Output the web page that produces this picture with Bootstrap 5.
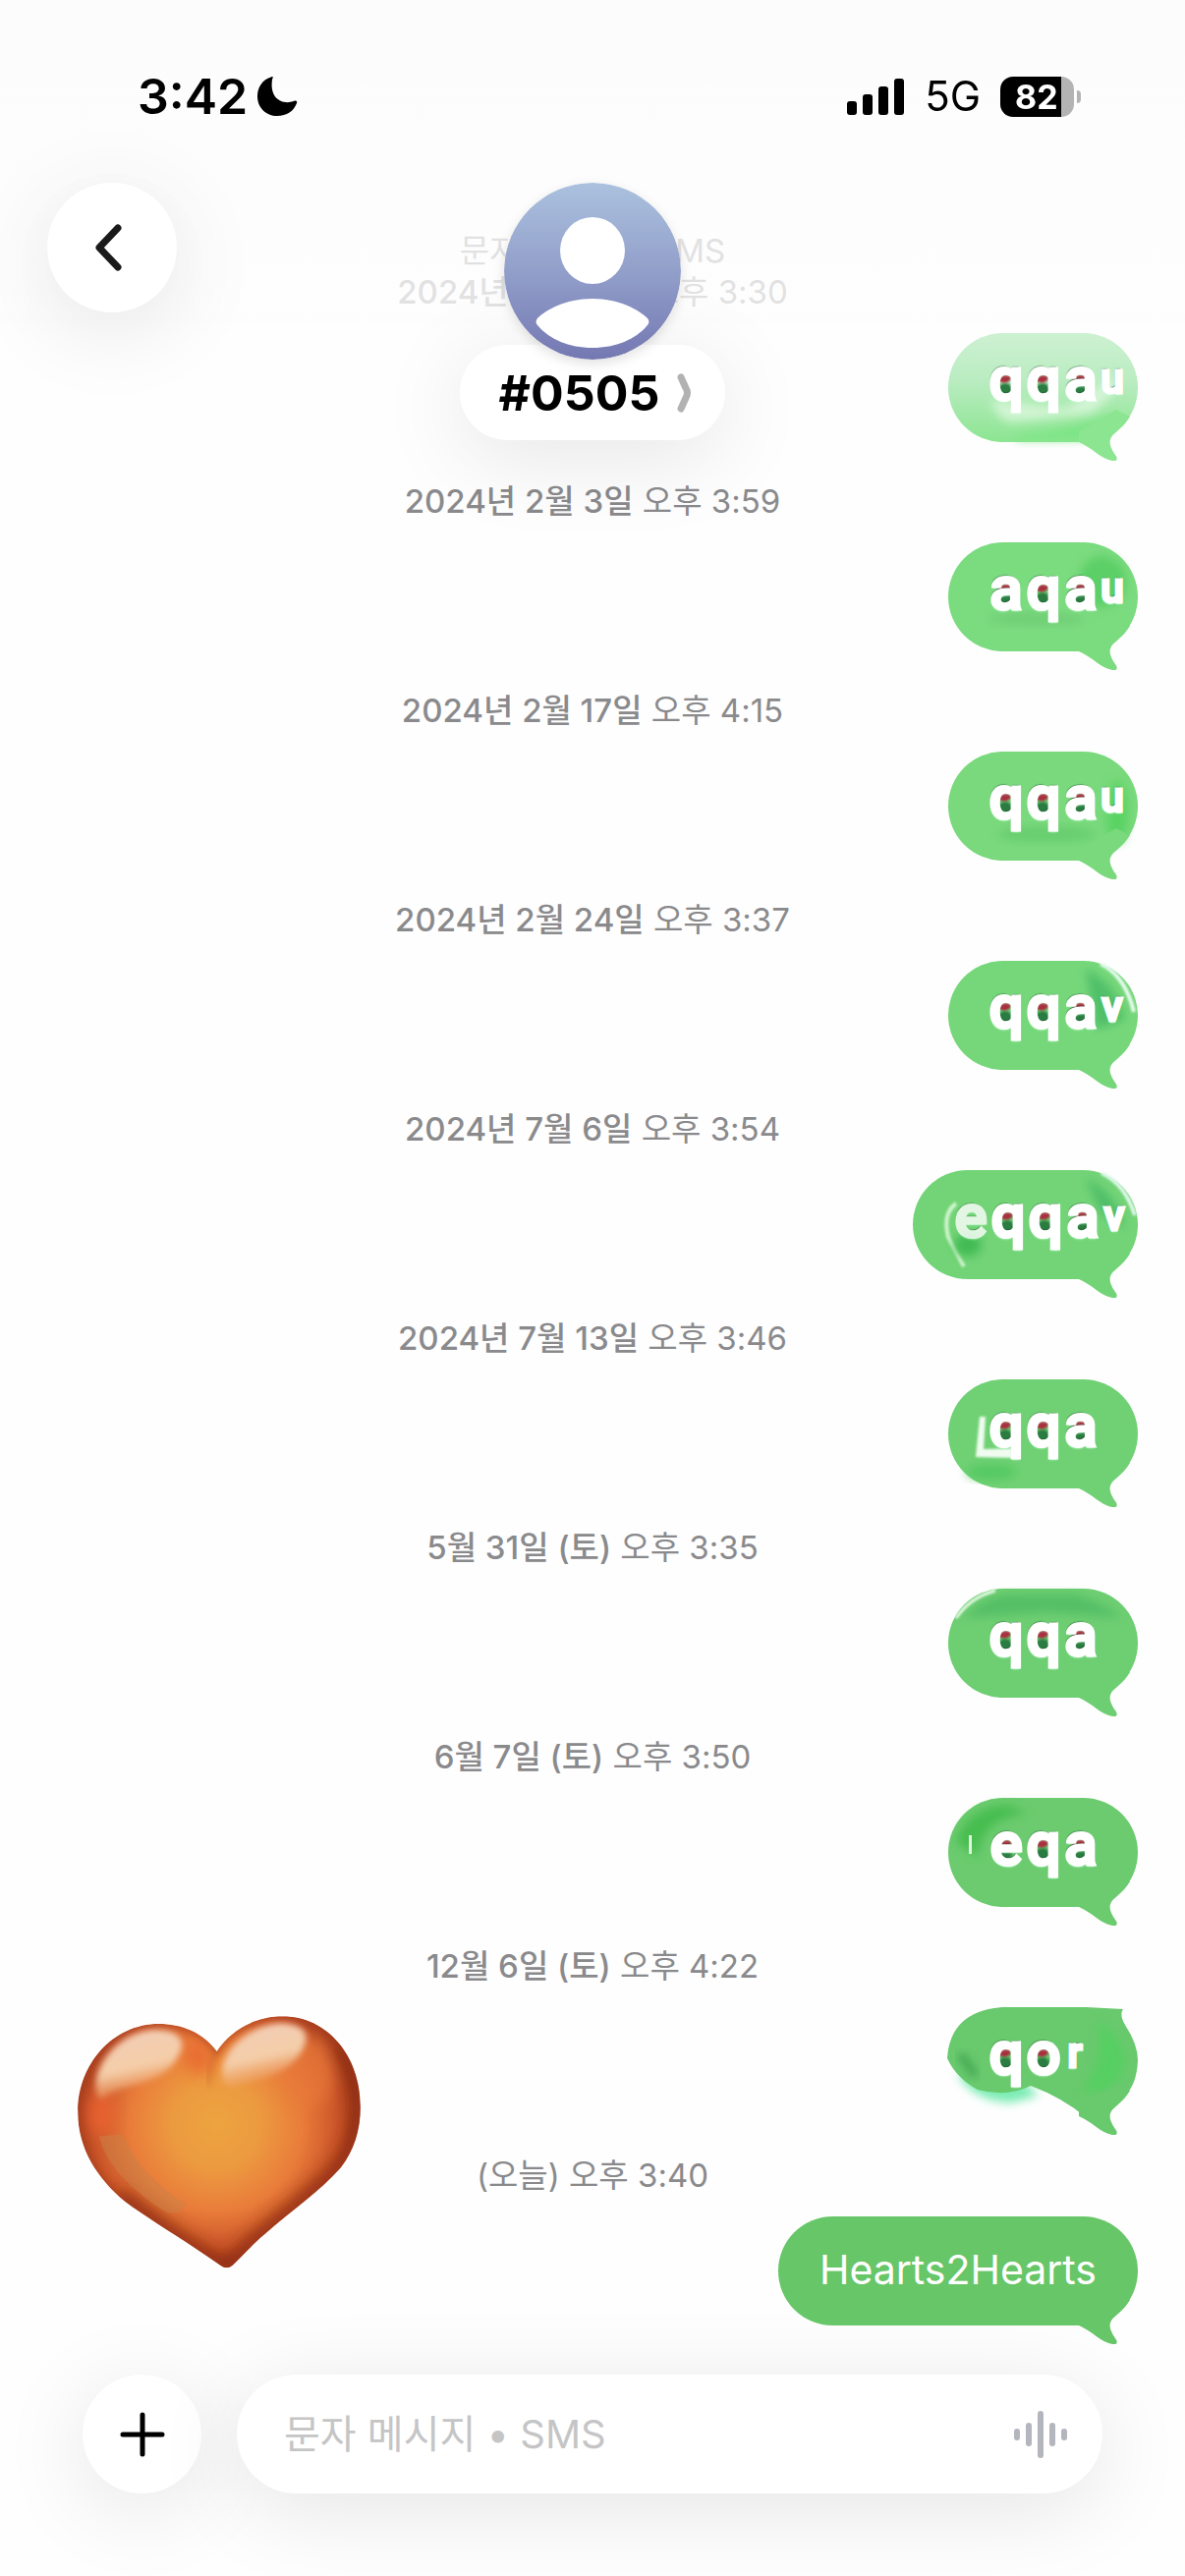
<!DOCTYPE html>
<html lang="ko">
<head>
<meta charset="utf-8">
<meta name="viewport" content="width=device-width, initial-scale=1">
<title>#0505</title>
<link href="https://cdn.jsdelivr.net/npm/bootstrap@5.3.0/dist/css/bootstrap.min.css" rel="stylesheet">
<style>
  body { font-family: Inter, "Noto Sans CJK KR", sans-serif; background: #fefefe; color: #000; }
  svg { display: block; flex: none; }

  /* header floating over the conversation */
  .top-bar { background: linear-gradient(rgba(252,252,252,1) 0, rgba(252,252,252,.76) 110px, rgba(253,253,253,.76) 310px, rgba(254,254,254,0) 340px); height: 530px; pointer-events: none; }
  .top-bar button { pointer-events: auto; }
  .status { padding: 68px 106px 0 140px; height: 186px; }
  .clock { font-size: 50px; line-height: 60px; font-weight: 600; }
  .network { font-size: 42px; line-height: 60px; padding: 0 20px 0 21px; }
  .battery { width: 75px; height: 41px; border-radius: 13px; background: linear-gradient(90deg, #000 62px, #b3b3b3 62px); color: #fff; font-size: 34px; line-height: 41px; font-weight: 700; padding-left: 15px; }
  .nub { width: 4px; height: 13px; margin-left: 3px; border-radius: 0 4px 4px 0; background: #b3b3b3; }
  .floating { background: #fff; border: 0; box-shadow: 0 16px 90px rgba(0,0,0,.1); }
  .round-lg { width: 132px; height: 132px; }
  .round-md { width: 121px; height: 121px; }
  .nav-row { display: grid; grid-template-columns: 1fr auto 1fr; padding: 0 48px; }
  .avatar { width: 180px; height: 180px; margin-bottom: -15px; z-index: 1; border-radius: 50%; filter: drop-shadow(0 4px 6px rgba(0,0,0,.12)); }
  .contact { height: 97px; padding: 0 33px 0 40px; gap: 18px; font-size: 50px; line-height: 60px; font-weight: 700; }

  /* conversation */
  .thread { padding: 234px 48px 0; }
  .stamp { font-size: 33px; line-height: 42px; color: #8a8a8d; text-align: center; }
  .stamp b { font-weight: 500; }
  .entry + .entry { margin-top: 39px; }
  .bubble { position: relative; height: 111px; min-width: 193px; margin-top: 21px; border-radius: 56px; background: var(--tone); color: #fff; font-size: 41px; line-height: 109px; padding: 0 42px; }
  .tail { position: absolute; right: 0; bottom: -19px; fill: var(--end, var(--tone)); }
  .tone-1 { --tone: linear-gradient(#cdf1d2, #b9ecc0 45%, #8ce591); --end: #8ce591; }
  .tone-2 { --tone: #7bdb7f; }
  .tone-3 { --tone: #79d97c; }
  .tone-4 { --tone: #76d77a; }
  .tone-5 { --tone: #73d477; }
  .tone-6 { --tone: #70d174; }
  .tone-7 { --tone: #6ece72; }
  .tone-8 { --tone: #6bcb6e; }
  .tone-9 { --tone: transparent; --end: #69c96d; }
  .tone-10 { --tone: #67c667; }
  .tone-5 .bubble { min-width: 229px; }

  /* scrambled text */
  .scrambled { padding: 0 0 0 40px; font: 500 62px/94px Roboto, sans-serif; display: flex; }
  .scrambled span { position: relative; z-index: 1; width: 38px; text-align: center; -webkit-text-stroke: 3px #fff; text-shadow: -1px -2px 1px rgba(20,70,40,.6), 0 2px 2px rgba(200,255,215,.9);
    background: radial-gradient(ellipse 9px 7px at 17px 45px, #a8303f 55%, transparent), radial-gradient(ellipse 9px 8px at 18px 57px, #2a7c40 50%, transparent); }
  .scrambled .plain { background: none; opacity: .8; }
  .scrambled .half { width: 26px; font-size: 42px; background: none; }
  .smudge { position: absolute; left: 0; top: 0; overflow: visible; }

  .sticker { position: absolute; left: 79px; bottom: 58px; }

  /* composer */
  .composer { padding: 50px 84px 84px; gap: 36px; }
  .field { height: 121px; padding: 0 36px 0 48px; }
  .field input { font-size: 40px; line-height: 60px; outline: 0; background: transparent; min-width: 0; }
  .field input::placeholder { color: #c5c5c6; opacity: 1; }
</style>
</head>
<body>
<svg width="0" height="0" class="position-absolute" aria-hidden="true">
  <defs>
    <path id="tail" d="M2 37 C16 43 24 54 36 56 C41 57 42 54 39 50 C34 43 32 37 35 32 C39 26 47 23 54 11 L40 4 L2 26Z"/>
    <filter id="soft" x="-30%" y="-30%" width="160%" height="160%"><feGaussianBlur stdDeviation="5"/></filter>
    <filter id="fine" x="-30%" y="-30%" width="160%" height="160%"><feGaussianBlur stdDeviation="1"/></filter>
  </defs>
</svg>

<header class="top-bar fixed-top">
  <div class="status d-flex align-items-start justify-content-between">
    <div class="d-flex align-items-center gap-2">
      <span class="clock">3:42</span>
      <svg width="44" height="42" viewBox="0 0 44 42" aria-label="방해금지 모드"><path d="M17 1 C6 4 2 13 2 21 C2 33 11 41 22 41 C32 41 39 36 42 28 C43 26 41 25 39 26 C28 30 14 24 17 4 C18 1 18 1 17 1Z"/></svg>
    </div>
    <div class="d-flex align-items-center">
      <svg width="58" height="37" viewBox="0 0 58 37" aria-label="신호 강도"><rect y="23" width="10" height="14" rx="3"/><rect x="16" y="16" width="10" height="21" rx="3"/><rect x="32" y="8" width="10" height="29" rx="3"/><rect x="48" width="10" height="37" rx="3"/></svg>
      <span class="network">5G</span>
      <span class="battery">82</span><span class="nub"></span>
    </div>
  </div>
  <div class="nav-row align-items-start">
    <button type="button" class="floating round-lg rounded-circle d-flex align-items-center justify-content-center p-0" aria-label="뒤로">
      <svg width="40" height="56" viewBox="0 0 40 56"><path d="M26 8 L7 28 L26 48" fill="none" stroke="#1a1a1a" stroke-width="7" stroke-linecap="round" stroke-linejoin="round"/></svg>
    </button>
    <div class="d-flex flex-column align-items-center">
      <svg class="avatar" viewBox="0 0 180 180" aria-hidden="true">
        <defs><linearGradient id="sky" x2="0" y2="1"><stop stop-color="#abc1de"/><stop offset=".5" stop-color="#929fca"/><stop offset="1" stop-color="#7478b2"/></linearGradient></defs>
        <circle cx="90" cy="90" r="90" fill="url(#sky)"/>
        <ellipse cx="90" cy="69" rx="33" ry="34" fill="#fff"/>
        <path d="M90 118 C62 118 42 130 34 138 C32 141 32 143 35 146 C46 159 66 168 90 168 C114 168 134 159 145 146 C148 143 148 141 146 138 C138 130 118 118 90 118Z" fill="#fff"/>
      </svg>
      <button type="button" class="contact floating rounded-pill d-flex align-items-center">#0505
        <svg width="16" height="40" viewBox="0 0 16 40"><path d="M4 4 L9 15 Q12 20 9 25 L4 36" fill="none" stroke="#b2b2b2" stroke-width="7" stroke-linecap="round"/></svg>
      </button>
    </div>
  </div>
</header>

<main class="position-relative">
  <section class="thread">
    <div class="stamp">문자 메시지 • SMS</div>
    <article class="entry d-flex flex-column align-items-end tone-1">
      <time class="stamp w-100"><b>2024년 1월 20일</b> 오후 3:30</time>
      <div class="bubble scrambled">
        <svg class="smudge" width="192" height="111"><path d="M44 68 Q50 95 75 90 L145 82 Q175 60 170 44 L120 76Z" fill="#e9fbe9" opacity=".65" filter="url(#soft)"/><path d="M70 104 Q120 100 175 80 L150 108 L70 109Z" fill="#7be584" filter="url(#soft)"/></svg>
        <span>q</span><span>q</span><span>a</span><span class="half">u</span>
        <svg class="tail" width="62" height="56"><use href="#tail"/></svg>
      </div>
    </article>
    <article class="entry d-flex flex-column align-items-end tone-2">
      <time class="stamp w-100"><b>2024년 2월 3일</b> 오후 3:59</time>
      <div class="bubble scrambled">
        <svg class="smudge" width="192" height="111"><ellipse cx="157" cy="40" rx="24" ry="26" fill="#5ccf66" filter="url(#soft)"/><ellipse cx="90" cy="78" rx="50" ry="6" fill="#6fcd74" filter="url(#soft)"/></svg>
        <span>a</span><span>q</span><span>a</span><span class="half">u</span>
        <svg class="tail" width="62" height="56"><use href="#tail"/></svg>
      </div>
    </article>
    <article class="entry d-flex flex-column align-items-end tone-3">
      <time class="stamp w-100"><b>2024년 2월 17일</b> 오후 4:15</time>
      <div class="bubble scrambled">
        <svg class="smudge" width="192" height="111"><ellipse cx="172" cy="62" rx="11" ry="32" fill="#5ad364" filter="url(#soft)"/><ellipse cx="100" cy="84" rx="50" ry="8" fill="#67ce6e" filter="url(#soft)"/></svg>
        <span>q</span><span>q</span><span>a</span><span class="half">u</span>
        <svg class="tail" width="62" height="56"><use href="#tail"/></svg>
      </div>
    </article>
    <article class="entry d-flex flex-column align-items-end tone-4">
      <time class="stamp w-100"><b>2024년 2월 24일</b> 오후 3:37</time>
      <div class="bubble scrambled">
        <svg class="smudge" width="192" height="111"><path d="M155 3 Q180 15 189 52" fill="none" stroke="#e8fbf0" stroke-width="4" filter="url(#fine)"/><path d="M140 8 Q172 24 180 60 L150 70Z" fill="#4fbf68" filter="url(#soft)"/></svg>
        <span>q</span><span>q</span><span>a</span><span class="half">v</span>
        <svg class="tail" width="62" height="56"><use href="#tail"/></svg>
      </div>
    </article>
    <article class="entry d-flex flex-column align-items-end tone-5">
      <time class="stamp w-100"><b>2024년 7월 6일</b> 오후 3:54</time>
      <div class="bubble scrambled">
        <svg class="smudge" width="229" height="111"><path d="M192 3 Q216 14 226 46" fill="none" stroke="#e0f8ec" stroke-width="4" filter="url(#fine)"/><path d="M176 8 Q208 24 216 60 L192 44Z" fill="#4ebd68" filter="url(#soft)"/><path d="M44 34 Q30 44 36 68 Q46 88 52 98" fill="none" stroke="#d0f5cd" stroke-width="4" filter="url(#fine)"/><ellipse cx="56" cy="76" rx="14" ry="12" fill="#42bb55" filter="url(#soft)"/></svg>
        <span class="plain">e</span><span>q</span><span>q</span><span>a</span><span class="half">v</span>
        <svg class="tail" width="62" height="56"><use href="#tail"/></svg>
      </div>
    </article>
    <article class="entry d-flex flex-column align-items-end tone-6">
      <time class="stamp w-100"><b>2024년 7월 13일</b> 오후 3:46</time>
      <div class="bubble scrambled">
        <svg class="smudge" width="192" height="111"><path d="M32 38 L28 79 L70 80 L72 70 L36 71 L38 38Z" fill="#effcef" filter="url(#fine)"/><ellipse cx="44" cy="94" rx="26" ry="8" fill="#55c962" filter="url(#soft)"/></svg>
        <span>q</span><span>q</span><span>a</span>
        <svg class="tail" width="62" height="56"><use href="#tail"/></svg>
      </div>
    </article>
    <article class="entry d-flex flex-column align-items-end tone-7">
      <time class="stamp w-100"><b>5월 31일 (토)</b> 오후 3:35</time>
      <div class="bubble scrambled">
        <svg class="smudge" width="192" height="111"><path d="M16 30 Q40 4 70 6 L130 6 Q170 20 176 30 L100 24Z" fill="#54bf66" filter="url(#soft)"/><path d="M8 30 Q22 9 48 2" fill="none" stroke="#e8f9e8" stroke-width="3" filter="url(#fine)"/></svg>
        <span>q</span><span>q</span><span>a</span>
        <svg class="tail" width="62" height="56"><use href="#tail"/></svg>
      </div>
    </article>
    <article class="entry d-flex flex-column align-items-end tone-8">
      <time class="stamp w-100"><b>6월 7일 (토)</b> 오후 3:50</time>
      <div class="bubble scrambled">
        <svg class="smudge" width="192" height="111"><path d="M8 45 Q18 10 60 7 L80 16 Q34 20 30 60Z" fill="#46bd50" filter="url(#soft)"/><rect x="21" y="38" width="3" height="19" fill="#dff8dd"/></svg>
        <span>e</span><span>q</span><span>a</span>
        <svg class="tail" width="62" height="56"><use href="#tail"/></svg>
      </div>
    </article>
    <article class="entry d-flex flex-column align-items-end tone-9">
      <time class="stamp w-100"><b>12월 6일 (토)</b> 오후 4:22</time>
      <div class="bubble scrambled">
        <svg class="smudge" width="192" height="130">
          <path d="M10 70 Q30 98 66 97 L92 90 L80 78 L30 60Z" fill="#7cecb4" filter="url(#soft)"/>
          <path d="M55 0 H140 L178 2 Q174 8 180 18 Q193 38 193 54 Q192 80 178 92 L167 104 L140 112 Q116 92 84 80 Q60 92 30 84 Q8 72 -1 52 Q2 4 55 0Z" fill="#69c96d"/>
          <path d="M152 14 Q178 28 180 56 Q176 76 160 86 L134 86 Q160 60 152 14Z" fill="#57cf62" filter="url(#soft)"/>
          <path d="M12 48 L28 70" stroke="#3aa04e" stroke-width="7" filter="url(#soft)"/>
        </svg>
        <span>q</span><span>o</span><span class="half">r</span>
        <svg class="tail" width="62" height="56"><use href="#tail"/></svg>
      </div>
    </article>
    <article class="entry d-flex flex-column align-items-end tone-10">
      <time class="stamp w-100">(오늘) 오후 3:40</time>
      <div class="bubble">Hearts2Hearts
        <svg class="tail" width="62" height="56"><use href="#tail"/></svg>
      </div>
    </article>
  </section>

  <svg class="sticker" width="288" height="257" viewBox="88 98 862 770" role="img" aria-label="하트">
    <defs>
      <radialGradient id="glow" gradientUnits="userSpaceOnUse" cx="510" cy="430" r="480">
        <stop stop-color="#eda43f"/><stop offset=".28" stop-color="#ec9a40"/><stop offset=".55" stop-color="#e97c3a"/><stop offset=".78" stop-color="#c95429"/><stop offset="1" stop-color="#8a2f19"/>
      </radialGradient>
      <linearGradient id="shine" x1=".3" x2=".6" y2="1"><stop stop-color="#f3ceb6"/><stop offset=".55" stop-color="#f4cda8"/><stop offset="1" stop-color="#ee9450" stop-opacity=".3"/></linearGradient>
      <clipPath id="heart"><path id="heart-line" d="M512 206 C470 148 405 122 335 122 C195 122 88 245 88 390 C88 505 150 595 230 662 C310 722 420 785 525 860 Q543 872 560 858 C590 830 620 795 660 762 C740 690 830 630 890 560 C930 510 950 445 950 375 C950 220 850 99 712 99 C625 99 550 145 512 206Z"/></clipPath>
      <filter id="melt" x="-40%" y="-40%" width="180%" height="180%"><feGaussianBlur stdDeviation="24"/></filter>
      <filter id="blend" x="-20%" y="-20%" width="140%" height="140%"><feGaussianBlur stdDeviation="9"/></filter>
    </defs>
    <g clip-path="url(#heart)">
      <use href="#heart-line" fill="url(#glow)"/>
      <ellipse cx="160" cy="395" rx="40" ry="65" fill="#ee6333" opacity=".8" filter="url(#melt)"/>
      <ellipse cx="455" cy="225" rx="40" ry="50" fill="#e8602f" opacity=".7" filter="url(#melt)"/>
      <ellipse cx="790" cy="270" rx="80" ry="110" fill="#e87a3a" opacity=".7" filter="url(#melt)"/>
      <path d="M900 180 C985 340 960 490 870 585 C790 660 690 735 620 800 L540 880 L400 790 L210 650" fill="none" stroke="#84280f" stroke-width="62" opacity=".75" filter="url(#melt)"/>
      <use href="#heart-line" fill="none" stroke="#a83c1c" stroke-width="20" opacity=".6" filter="url(#blend)"/>
      <path d="M512 206 Q485 250 486 310" fill="none" stroke="#b7481f" stroke-width="8" opacity=".5" filter="url(#blend)"/>
      <path d="M145 330 C130 250 215 145 320 140 C400 140 430 175 385 235 C340 310 190 310 165 350 Q150 350 145 330Z" fill="url(#shine)" filter="url(#blend)"/>
      <path d="M530 290 C515 210 610 122 710 120 C790 125 800 160 765 215 C720 280 640 290 575 310 Q540 320 530 290Z" fill="url(#shine)" filter="url(#blend)"/>
      <path d="M153 465 L225 458 C260 540 320 610 418 672 L400 694 Q370 705 345 690 C230 610 170 540 153 465Z" fill="#c98248" opacity=".5"/>
    </g>
  </svg>
</main>

<form class="composer d-flex align-items-center">
  <button type="button" class="floating round-md rounded-circle d-flex align-items-center justify-content-center p-0 flex-shrink-0" aria-label="추가">
    <svg width="46" height="46" viewBox="0 0 46 46"><path d="M23 3 V43 M3 23 H43" stroke="#000" stroke-width="5" stroke-linecap="round"/></svg>
  </button>
  <div class="field floating rounded-pill d-flex align-items-center flex-grow-1">
    <input type="text" class="border-0 p-0 flex-grow-1" placeholder="문자 메시지 • SMS" aria-label="문자 메시지">
    <button type="button" class="btn border-0 p-0" aria-label="음성 메시지">
      <svg width="54" height="48" viewBox="0 0 54 48" fill="#b3b6bc"><rect y="18" width="6" height="12" rx="3"/><rect x="12" y="12" width="6" height="24" rx="3"/><rect x="24" width="6" height="48" rx="3"/><rect x="36" y="12" width="6" height="24" rx="3"/><rect x="48" y="18" width="6" height="12" rx="3"/></svg>
    </button>
  </div>
</form>
<script src="https://cdn.jsdelivr.net/npm/bootstrap@5.3.0/dist/js/bootstrap.bundle.min.js"></script>
</body>
</html>
